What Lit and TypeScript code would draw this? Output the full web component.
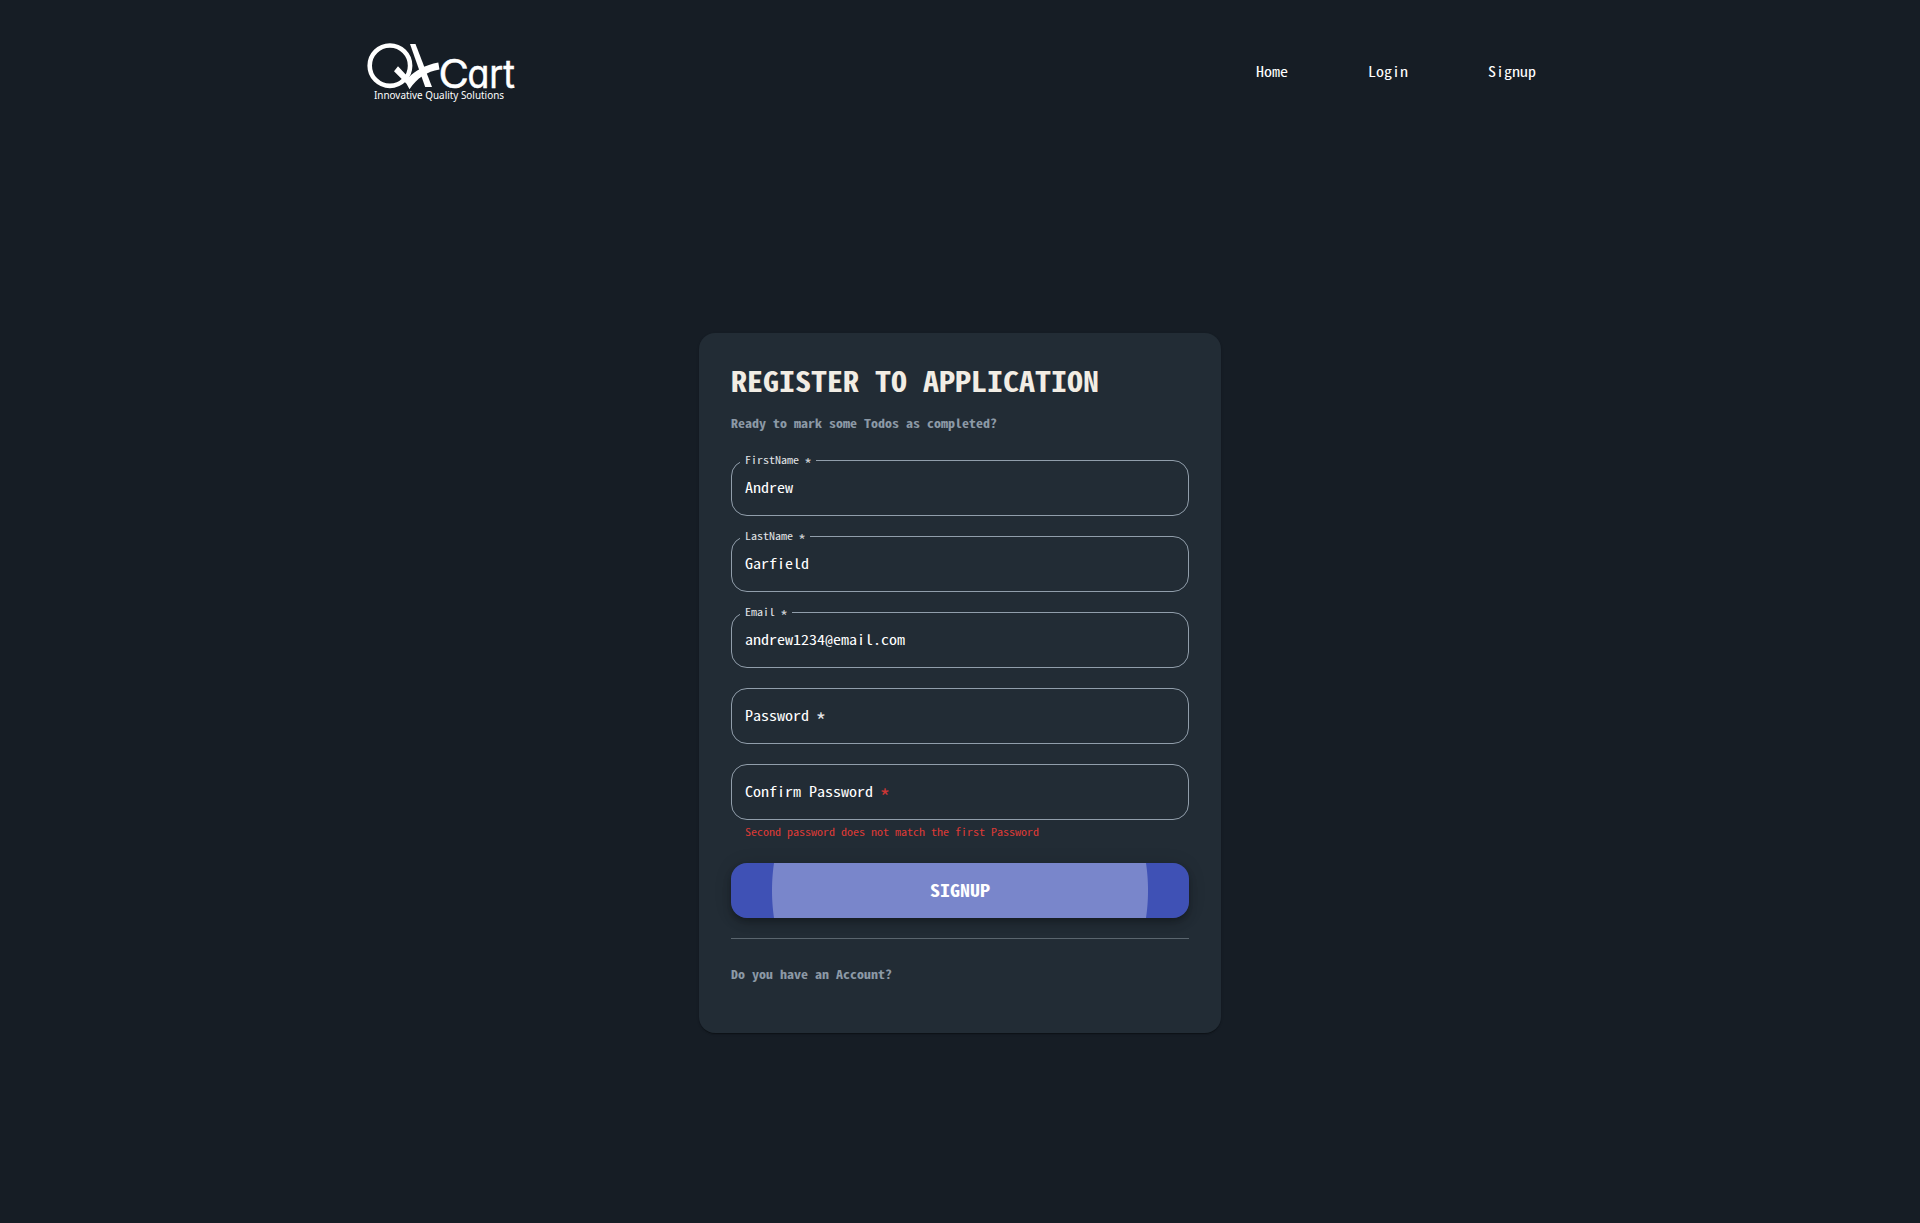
import { LitElement, html, css } from "lit";
import { customElement, property } from "lit/decorators.js";

@customElement("brand-logo")
export class BrandLogo extends LitElement {
  static styles = css`
    :host { display: block; width: 150px; height: 62px; }
    svg { display: block; overflow: visible; }
    .word {
      font-family: Inter, Lato, "Liberation Sans", sans-serif; font-weight: 400;
      font-feature-settings: "cv11"; fill: #fff; stroke: #fff; stroke-width: 0.5px;
    }
    .tag { font-family: "Noto Sans", sans-serif; font-size: 10px; fill: #fff; }
  `;
  render() {
    return html`<svg width="150" height="62" viewBox="0 0 150 62">
      <circle cx="22.9" cy="24.7" r="20.2" fill="none" stroke="#fff" stroke-width="4.6"></circle>
      <path d="M43 3L48.5 3L65 46L58.2 46Z" fill="#fff"></path>
      <path d="M31 25.2L41.5 36.5C48 29.5 58 24 71.3 21.4L72.5 28.5C60 30.5 50 37 42.5 48.3L39.5 42.8L27 30.2Z" fill="#fff"></path>
      <text class="word" x="71.5" y="46.6" font-size="39" textLength="30.5" lengthAdjust="spacingAndGlyphs">C</text>
      <text class="word" x="100.5" y="46.6" font-size="39" textLength="47.5" lengthAdjust="spacingAndGlyphs">art</text>
      <text class="tag" x="7" y="57.5" textLength="130" lengthAdjust="spacingAndGlyphs">Innovative Quality Solutions</text>
    </svg>`;
  }
}

@customElement("text-field")
export class TextField extends LitElement {
  @property() label = "";
  @property() value = "";
  @property() helper = "";
  @property({ type: Boolean }) invalid = false;

  static styles = css`
    :host { display: block; }
    .box {
      box-sizing: border-box; height: 56px; margin: 0; padding: 0 14px;
      display: flex; align-items: center; position: relative;
      font-size: 16px; line-height: 23px; color: #fff;
    }
    fieldset {
      position: absolute; inset: -5px 0 0; margin: 0; padding: 0 8px;
      border: 1px solid #919eab; border-radius: 16px; min-width: 0;
    }
    legend {
      height: 11px; padding: 0 5px; font-size: 12px; line-height: 11px;
      color: #e0e3e6; white-space: pre;
    }
    legend.none { padding: 0; width: 0; }
    .t { display: inline-block; transform: translateY(-1px) scaleY(0.86); }
    .star { display: inline-block; transform: translateY(0.32em) scale(1.35, 1.5); transform-origin: 50% 38%; opacity: 0.88; }
    .bad { color: #e53935; }
    .helper { margin: 3px 14px 0; font-size: 12px; line-height: 20px; color: #dc3a36; }
    span, p { white-space: pre; }
  `;
  render() {
    return html`<div class="box">
        <fieldset>
          ${this.value
            ? html`<legend><span class="t">${this.label} <span class="star">*</span></span></legend>`
            : html`<legend class="none"></legend>`}
        </fieldset>
        ${this.value
          ? html`<span class="t">${this.value}</span>`
          : html`<span class="t">${this.label} <span class="star ${this.invalid ? "bad" : ""}">*</span></span>`}
      </div>
      ${this.helper ? html`<p class="helper"><span class="t">${this.helper}</span></p>` : ""}`;
  }
}

@customElement("app-root")
export class AppRoot extends LitElement {
  static styles = css`
    :host {
      display: flex; flex-direction: column; box-sizing: border-box;
      height: 1223px; background: #161d25; color: #fff;
      font-family: "Noto Sans Mono CJK SC", "Liberation Mono", monospace;
      font-size: 16px;
    }
    header {
      display: flex; justify-content: space-between; align-items: center;
      height: 144px; width: 1186px; margin: 0 auto; box-sizing: border-box;
    }
    nav { display: flex; gap: 80px; padding-right: 17px; line-height: 24px; }
    .t { display: inline-block; transform: translateY(-1px) scaleY(0.86); }
    main {
      flex: 1; display: flex; justify-content: center; align-items: center;
      padding-bottom: 1px;
    }
    .card {
      box-sizing: border-box; width: 522px; height: 700px; padding: 32px;
      background: #222c35; border-radius: 16px;
      box-shadow: 0 2px 1px -1px rgba(0,0,0,.2), 0 1px 1px rgba(0,0,0,.14), 0 1px 3px rgba(0,0,0,.12);
    }
    h1 { margin: 0; font-size: 32px; line-height: 34px; font-weight: 700; color: #f2ede4; white-space: nowrap; }
    .sub { margin: 15px 0 0; font-size: 14px; line-height: 20px; font-weight: 700; color: #8c99a6; }
    .fields { display: flex; flex-direction: column; gap: 20px; margin-top: 26px; }
    button {
      display: block; width: 100%; height: 55px; margin: 20px 0 0; padding: 0; border: 0;
      border-radius: 16px; color: #fff; font: inherit; font-size: 20px; font-weight: 700;
      background: radial-gradient(circle 188px at center, #7986cb 187.5px, #3f51b5 188.5px);
      box-shadow: 0 3px 5px -1px rgba(0,0,0,.2), 0 6px 10px rgba(0,0,0,.14), 0 1px 18px rgba(0,0,0,.12);
    }
    hr { height: 1px; border: 0; margin: 20px 0 0; background: #5a656e; }
    .account { margin-top: 26px; }
    h1 .t { transform: translateY(-2.5px) scaleY(0.86); }
  `;
  render() {
    return html`
      <header>
        <brand-logo></brand-logo>
        <nav>${["Home", "Login", "Signup"].map((t) => html`<span class="t">${t}</span>`)}</nav>
      </header>
      <main>
        <section class="card">
          <h1><span class="t">REGISTER TO APPLICATION</span></h1>
          <p class="sub"><span class="t">Ready to mark some Todos as completed?</span></p>
          <div class="fields">
            <text-field label="FirstName" value="Andrew"></text-field>
            <text-field label="LastName" value="Garfield"></text-field>
            <text-field label="Email" value="andrew1234@email.com"></text-field>
            <text-field label="Password"></text-field>
            <text-field label="Confirm Password" invalid helper="Second password does not match the first Password"></text-field>
          </div>
          <button><span class="t">SIGNUP</span></button>
          <hr />
          <p class="sub account"><span class="t">Do you have an Account?</span></p>
        </section>
      </main>
    `;
  }
}
